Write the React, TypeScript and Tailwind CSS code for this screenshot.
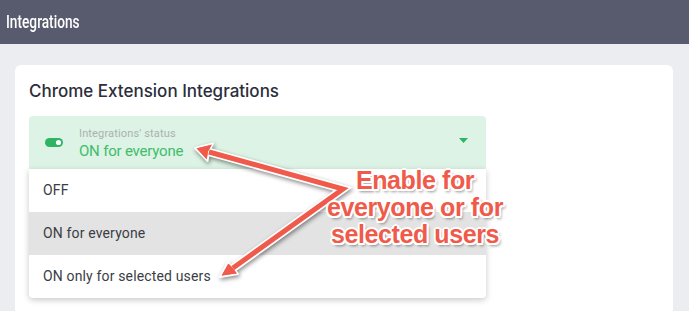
import React from 'react'

const options = ['OFF', 'ON for everyone', 'ON only for selected users']

function ToggleIcon() {
  return (
    <svg width="18" height="9" viewBox="0 0 18 9">
      <rect x="0" y="0" width="18" height="9" rx="4.5" fill="#2fb463" />
      <circle cx="13.5" cy="4.5" r="2.6" fill="#ffffff" />
    </svg>
  )
}

function Arrows() {
  return (
    <svg
      className="pointer-events-none absolute left-0 top-0 drop-shadow-[1px_2px_2px_rgba(0,0,0,0.45)]"
      width="689"
      height="311"
      viewBox="0 0 689 311"
    >
      <path d="M209,152 L343,189 L233,268" fill="none" stroke="#ffffff" strokeWidth="8.5" strokeLinejoin="miter" />
      <polygon points="195,148 213,143.5 209,151.5 207.5,161" fill="#f05a4a" stroke="#ffffff" strokeWidth="2" strokeLinejoin="round" />
      <polygon points="220,277 228,262 233,268 238,274" fill="#f05a4a" stroke="#ffffff" strokeWidth="2" strokeLinejoin="round" />
      <path d="M209,152 L343,189 L233,268" fill="none" stroke="#f05a4a" strokeWidth="5" strokeLinejoin="miter" />
      <polygon points="196.5,148.3 212,144.6 208,151.8 206.6,159.5" fill="#f05a4a" />
      <polygon points="221.5,275.5 228.5,263.5 233,268 237,273.5" fill="#f05a4a" />
    </svg>
  )
}

export default function App() {
  return (
    <div className="relative h-[311px] overflow-hidden bg-[#ecedf1] font-['Roboto',sans-serif]">
      <div className="flex h-[44px] items-center bg-[#585b6e] px-[6px]">
        <h1 className="origin-left scale-x-[0.72] text-[19px] font-medium leading-[22px] text-white">Integrations</h1>
      </div>

      <div className="mx-[15px] mr-[16px] mt-[21px] h-[300px] rounded-[6px] bg-white px-[14px] pt-[14px]">
        <h2 className="font-['Inter',sans-serif] text-[17px] font-medium leading-[24px] text-[#2b2e3b]">
          Chrome Extension Integrations
        </h2>

        <div className="mt-[13px] w-[457px]">
          <div className="flex h-[53px] items-center rounded-t-[4px] bg-[#dcf3e5] pl-[16px] pr-[18px]">
            <ToggleIcon />
            <div className="ml-[16px] flex flex-1 flex-col pt-[1px]">
              <span className="text-[11px] leading-[13px] tracking-[0.15px] text-[#aab2ae]">Integrations' status</span>
              <span className="mt-[2px] text-[15px] leading-[18px] tracking-[-0.2px] text-[#3ebd6b]">ON for everyone</span>
            </div>
            <svg width="9" height="5" viewBox="0 0 9 5" className="mb-[4px]">
              <polygon points="0,0 9,0 4.5,5" fill="#2fb463" />
            </svg>
          </div>

          <ul className="rounded-b-[4px] bg-white shadow-[0_2px_6px_rgba(0,0,0,0.22)]">
            {options.map((o, i) => (
              <li
                key={o}
                className={
                  'flex h-[43px] items-center pl-[14px] text-[14px] tracking-[0.15px] text-[#3a3d44] ' +
                  (i === 1 ? 'bg-[#e3e3e3]' : '')
                }
              >
                {o}
              </li>
            ))}
          </ul>
        </div>
      </div>

      <Arrows />

      <div className="pointer-events-none absolute left-[315px] top-[167px] w-[200px] text-center font-['Liberation_Sans',sans-serif] text-[25px] font-bold leading-[27px] tracking-[-0.4px] text-[#f05a4a] [text-shadow:2px_0_0_#fff,-2px_0_0_#fff,0_2px_0_#fff,0_-2px_0_#fff,1.5px_1.5px_0_#fff,-1.5px_1.5px_0_#fff,1.5px_-1.5px_0_#fff,-1.5px_-1.5px_0_#fff,2px_3px_3px_rgba(0,0,0,0.45)]">
        Enable for
        <br />
        everyone or for
        <br />
        selected users
      </div>
    </div>
  )
}
